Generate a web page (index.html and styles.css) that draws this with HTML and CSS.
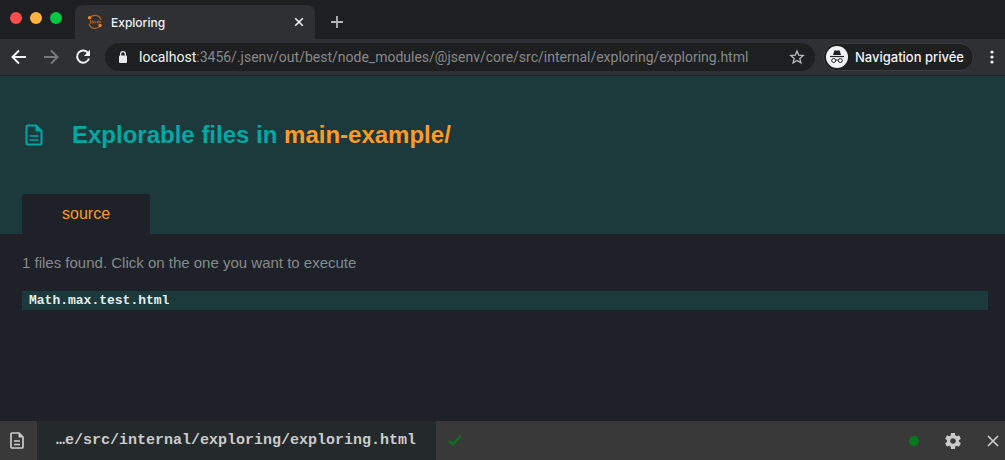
FILE: index.html
```html
<!DOCTYPE html>
<html lang="en">
<head>
<meta charset="utf-8">
<meta name="viewport" content="width=device-width, initial-scale=1">
<title>Exploring</title>
<link rel="stylesheet" href="styles.css">
</head>
<body>
<div class="browser">
  <div class="tab-strip">
    <div class="window-controls">
      <button class="light light-red" aria-label="Close window"></button>
      <button class="light light-yellow" aria-label="Minimize window"></button>
      <button class="light light-green" aria-label="Zoom window"></button>
    </div>
    <div class="browser-tab">
      <svg class="favicon" viewBox="0 0 16 16" width="16" height="16" aria-hidden="true">
        <path d="M2.6 4.2A6.3 6.3 0 0 1 14 6M13 12A6.3 6.3 0 0 1 2 10" fill="none" stroke="#b8641f" stroke-width="1.2"/>
        <path d="M3.5 6v3q0 1-1 1M6.500 7h-1.500v1h1.500v1h-2M8 7v2.500M8 8h1.500M10.500 9.500v-2.500h1.500v2.500M12.500 7l.8 2 .8-2" fill="none" stroke="#a95a1c" stroke-width="1"/>
        <circle cx="2.600" cy="3.800" r="1.700" fill="#f5821f"/>
        <circle cx="13" cy="11.500" r="1.700" fill="#f5821f"/>
      </svg>
      <span class="browser-tab-title">Exploring</span>
      <button class="icon-button tab-close" aria-label="Close tab">
        <svg viewBox="0 0 10 10" width="10" height="10"><path d="M1.200 1.200l7.600 7.600M8.800 1.200L1.200 8.800" stroke="#f1f3f4" stroke-width="1.600"/></svg>
      </button>
    </div>
    <button class="icon-button new-tab" aria-label="New tab">
      <svg viewBox="0 0 12 12" width="12" height="12"><path d="M6 0v12M0 6h12" stroke="#b4b6b9" stroke-width="1.800"/></svg>
    </button>
  </div>

  <div class="toolbar">
    <div class="nav-buttons">
      <button class="icon-button" aria-label="Back">
        <svg viewBox="0 0 16 16" width="16" height="16"><path d="M15 8H2M8 1.500L1.500 8 8 14.500" fill="none" stroke="#f1f3f4" stroke-width="2"/></svg>
      </button>
      <button class="icon-button" aria-label="Forward">
        <svg viewBox="0 0 16 16" width="16" height="16"><path d="M1 8h13M8 1.500L14.500 8 8 14.500" fill="none" stroke="#77797c" stroke-width="2"/></svg>
      </button>
      <button class="icon-button" aria-label="Reload">
        <svg viewBox="0 0 16 16" width="16" height="16"><path d="M13.300 4.300A6.100 6.100 0 1 0 14 9.500" fill="none" stroke="#f1f3f4" stroke-width="2"/><path d="M15 .8v6.200H8.800z" fill="#f1f3f4"/></svg>
      </button>
    </div>
    <div class="omnibox">
      <svg class="lock" viewBox="0 0 10 12" width="10" height="12" aria-hidden="true"><path d="M2.700 5V3a2.300 2.300 0 0 1 4.600 0v2" fill="none" stroke="#e8eaed" stroke-width="1.300"/><rect x="1" y="4.500" width="8" height="7.500" rx="1" fill="#e8eaed"/></svg>
      <div class="url" role="textbox" contenteditable="true" spellcheck="false" aria-label="Address"><span class="url-host">localhost</span>:3456/.jsenv/out/best/node_modules/@jsenv/core/src/internal/exploring/exploring.html</div>
      <button class="icon-button" aria-label="Bookmark this page">
        <svg viewBox="0 0 16 16" width="16" height="16"><path d="M8 2l1.700 4.100 4.500.4-3.400 2.900 1.100 4.400L8 11.500l-3.900 2.300 1.100-4.400L1.800 6.500l4.500-.4z" fill="none" stroke="#b8babd" stroke-width="1.300"/></svg>
      </button>
    </div>
    <button class="private-badge">
      <svg viewBox="0 0 22 22" width="22" height="22" aria-hidden="true">
        <circle cx="11" cy="11" r="11" fill="#f1f3f4"/>
        <path d="M7 9l1.300-4.300q.3-.7 1-.5l1.700.5 1.700-.5q.7-.2 1 .5L15 9z" fill="#202124"/>
        <path d="M4 10.500h14" stroke="#202124" stroke-width="1.200"/>
        <g fill="none" stroke="#202124" stroke-width="1"><circle cx="7.700" cy="14.500" r="2"/><circle cx="14.300" cy="14.500" r="2"/><path d="M9.800 14.300q1.200-.8 2.400 0"/></g>
      </svg>
      <span>Navigation privée</span>
    </button>
    <button class="icon-button menu-button" aria-label="Menu">
      <svg viewBox="0 0 4 14" width="4" height="14"><g fill="#f1f3f4"><circle cx="2" cy="2" r="1.600"/><circle cx="2" cy="7" r="1.600"/><circle cx="2" cy="12" r="1.600"/></g></svg>
    </button>
  </div>

  <header class="page-header">
    <h1 class="page-title">
      <svg viewBox="0 0 18 22" width="18" height="22" aria-hidden="true"><path d="M2.500 1.500H11L16.500 7v12.500a1 1 0 0 1-1 1h-13a1 1 0 0 1-1-1v-17a1 1 0 0 1 1-1z" fill="none" stroke="currentColor" stroke-width="2"/><path d="M10.500 1v6.500H17z" fill="currentColor"/><path d="M4.500 12h9M4.500 16h9" stroke="currentColor" stroke-width="1.600"/></svg>
      <span>Explorable files in <a class="project-link" href="#">main-example/</a></span>
    </h1>
    <nav class="groups"><button class="group-tab">source</button></nav>
  </header>

  <main class="files">
    <p class="files-summary">1 files found. Click on the one you want to execute</p>
    <ul class="file-list">
      <li><a class="file-link" href="#">Math.max.test.html</a></li>
    </ul>
  </main>

  <footer class="status-bar">
    <button class="icon-button files-button" aria-label="Explore files">
      <svg viewBox="0 0 14 17" width="14" height="17"><path d="M2 1h7l4 4v10a1 1 0 0 1-1 1H2a1 1 0 0 1-1-1V2a1 1 0 0 1 1-1z" fill="none" stroke="#cbcbcb" stroke-width="1.700"/><path d="M8.500 1v4.500H13z" fill="#cbcbcb"/><path d="M4 9h6M4 12.500h6" stroke="#cbcbcb" stroke-width="1.400"/></svg>
    </button>
    <a class="current-file" href="#">…e/src/internal/exploring/exploring.html</a>
    <button class="icon-button" aria-label="Execution succeeded">
      <svg viewBox="0 0 14 11" width="14" height="11"><path d="M1 5.700l3.800 3.700L12.800 1" fill="none" stroke="#057a1b" stroke-width="2.200"/></svg>
    </button>
    <div class="status-actions">
      <button class="icon-button" aria-label="Connected">
        <svg viewBox="0 0 10 10" width="10" height="10"><circle cx="5" cy="5" r="5" fill="#057a1b"/></svg>
      </button>
      <button class="icon-button" aria-label="Settings">
        <svg viewBox="2 2 20 20" width="16" height="16"><path fill="#cbcbcb" d="M19.430 12.980c.04-.32.07-.64.07-.98s-.03-.66-.07-.98l2.110-1.650c.19-.15.24-.42.12-.64l-2-3.460c-.12-.22-.39-.3-.61-.22l-2.490 1c-.52-.4-1.080-.73-1.690-.98l-.38-2.650C14.460 2.180 14.250 2 14 2h-4c-.25 0-.46.18-.49.42l-.38 2.650c-.61.25-1.170.59-1.690.98l-2.490-1c-.23-.09-.49 0-.61.22l-2 3.460c-.13.22-.07.49.12.64l2.110 1.650c-.04.32-.07.65-.07.98s.03.66.07.98l-2.110 1.650c-.19.15-.24.42-.12.64l2 3.460c.12.22.39.3.61.22l2.490-1c.52.4 1.080.73 1.690.98l.38 2.650c.03.24.24.42.49.42h4c.25 0 .46-.18.49-.42l.38-2.650c.61-.25 1.170-.59 1.690-.98l2.490 1c.23.09.49 0 .61-.22l2-3.460c.12-.22.07-.49-.12-.64l-2.110-1.650zM12 15.500c-1.930 0-3.500-1.570-3.500-3.500s1.570-3.500 3.500-3.500 3.500 1.570 3.500 3.500-1.570 3.500-3.500 3.500z"/></svg>
      </button>
      <button class="icon-button" aria-label="Close toolbar">
        <svg viewBox="0 0 12 12" width="12" height="12"><path d="M1 1l10 10M11 1L1 11" stroke="#cbcbcb" stroke-width="1.700"/></svg>
      </button>
    </div>
  </footer>
</div>
</body>
</html>
```
FILE: styles.css
```css
* {
  box-sizing: border-box;
}

body {
  margin: 0;
  background: #1e2128;
  font-family: "Liberation Sans", Arial, sans-serif;
}

button {
  margin: 0;
  padding: 0;
  border: 0;
  background: none;
  font: inherit;
  color: inherit;
  cursor: pointer;
}

svg {
  display: block;
  flex: none;
}

a {
  text-decoration: none;
}

.icon-button {
  display: flex;
  align-items: center;
  justify-content: center;
  flex: none;
}

.browser {
  display: flex;
  flex-direction: column;
  min-height: 100vh;
}

.tab-strip,
.toolbar {
  font-family: Inter, Roboto, sans-serif;
  color: #f1f3f4;
}

.tab-strip {
  display: flex;
  align-items: stretch;
  padding-top: 5px;
  background: #1e1f21;
}

.window-controls {
  display: flex;
  align-items: flex-start;
  gap: 8px;
  padding: 7px 13px 0 10px;
}

.light {
  width: 12px;
  height: 12px;
  border-radius: 50%;
}

.light-red {
  background: #ff4c4c;
}

.light-yellow {
  background: #ffb43f;
}

.light-green {
  background: #00c941;
}

.browser-tab {
  display: flex;
  align-items: center;
  flex: 0 1 240px;
  height: 34px;
  padding: 0 11px 0 12px;
  border-radius: 8px 8px 0 0;
  background: #2f3034;
  font-size: 12px;
  font-weight: 500;
}

.browser-tab-title {
  flex: 1;
  padding-left: 8px;
}

.new-tab {
  padding: 0 16px;
}

.toolbar {
  display: flex;
  align-items: center;
  padding: 4px 11px;
  border-bottom: 1px solid #242529;
  background: #2f3034;
  font-size: 13px;
}

.nav-buttons {
  display: flex;
  gap: 16px;
  padding-right: 14px;
}

.omnibox {
  display: flex;
  align-items: center;
  flex: 1;
  min-width: 0;
  height: 28px;
  padding: 0 10px 0 13px;
  border-radius: 14px;
  background: #1e1f21;
}

.url {
  flex: 1;
  min-width: 0;
  overflow: hidden;
  padding-left: 11px;
  outline: 0;
  white-space: nowrap;
  font-family: Roboto, sans-serif;
  font-size: 14px;
  line-height: 20px;
  color: #87898c;
}

.url-host {
  color: #f1f3f4;
}

.private-badge {
  display: flex;
  align-items: center;
  gap: 7px;
  height: 28px;
  margin-left: 8px;
  padding: 0 9px 0 2px;
  border: 1px solid #3c3d41;
  border-radius: 14px;
  background: #1e1f21;
  font-weight: 500;
  white-space: nowrap;
}

.menu-button {
  padding-left: 16px;
}

.page-header {
  padding: 43px 22px 0;
  background: #1c393b;
}

.page-title {
  display: flex;
  align-items: center;
  gap: 29px;
  margin: 0;
  padding-left: 3px;
  font-size: 24px;
  line-height: 32px;
  color: #00a8a5;
}

.project-link {
  color: #ff9b26;
}

.groups {
  display: flex;
  margin-top: 43px;
}

.group-tab {
  padding: 0 40px;
  border-radius: 2px 2px 0 0;
  background: #1e2128;
  font-size: 16px;
  line-height: 40px;
  color: #ff9b26;
}

.files {
  flex: 1;
  padding: 19px 17px 20px 22px;
}

.files-summary {
  margin: 0 0 19px;
  font-size: 15px;
  line-height: 19px;
  color: #848b8c;
}

.file-list {
  margin: 0;
  padding: 0;
  list-style: none;
}

.file-link {
  display: block;
  padding: 0 7px;
  background: #1c393b;
  font: bold 13px/19px "Liberation Mono", "Courier New", monospace;
  color: #e6eeee;
}

.status-bar {
  display: flex;
  align-items: stretch;
  height: 39px;
  background: #393939;
}

.files-button {
  width: 37px;
  padding-right: 3px;
}

.current-file {
  padding: 0 20px 0 19px;
  margin-right: 12px;
  background: #24292b;
  font: bold 15px/39px "Liberation Mono", "Courier New", monospace;
  color: #cbcbcb;
  white-space: nowrap;
}

.status-actions {
  display: flex;
  gap: 26px;
  margin-left: auto;
  padding-right: 6px;
}
```
